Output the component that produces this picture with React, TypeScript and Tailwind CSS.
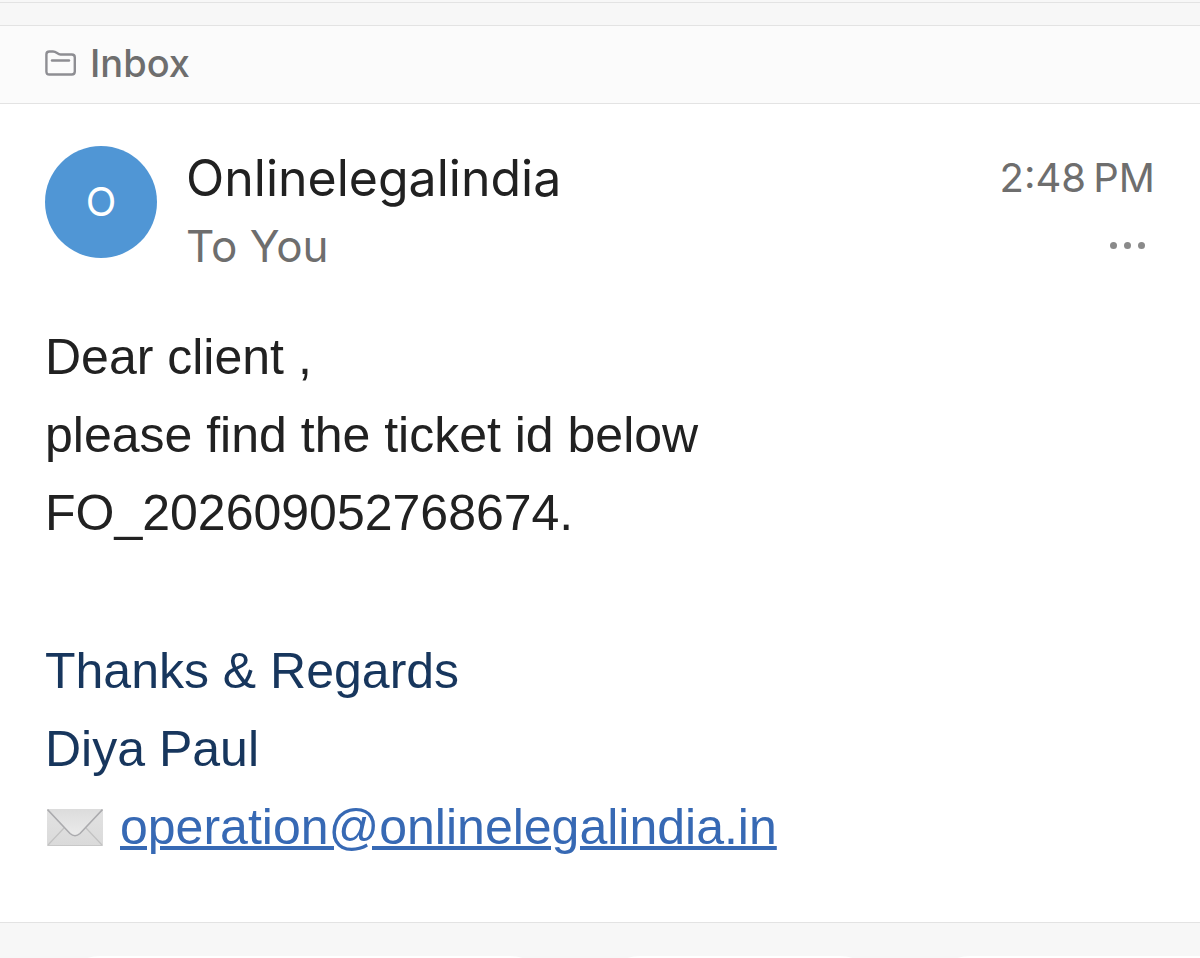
import React from "react";

function FolderIcon() {
  return (
    <svg
      className="w-8 h-8 shrink-0"
      viewBox="0 0 32 32"
      fill="none"
      stroke="#8e8e93"
      strokeWidth="2.4"
      strokeLinecap="round"
      strokeLinejoin="round"
      aria-hidden="true"
    >
      <path d="M1.4 7.5Q1.4 4.5 4.4 4.5H8C11.5 4.5 12.5 7.5 15.5 7.5H26.8Q29.8 7.5 29.8 10.5V24.5Q29.8 27.5 26.8 27.5H4.4Q1.4 27.5 1.4 24.5Z" />
      <path d="M7 13.5H24" />
    </svg>
  );
}

function EnvelopeIcon() {
  return (
    <svg
      className="w-14 h-10 shrink-0"
      viewBox="0 0 56 40"
      fill="none"
      role="img"
      aria-label="Email"
    >
      <defs>
        <linearGradient id="paper" x1="0" y1="0" x2="0" y2="1">
          <stop offset="0" stopColor="#e2e2e2" />
          <stop offset="1" stopColor="#dadada" />
        </linearGradient>
        <linearGradient id="flap" x1="0" y1="0" x2="0" y2="1">
          <stop offset="0" stopColor="#dcdcdc" />
          <stop offset="1" stopColor="#ebebeb" />
        </linearGradient>
      </defs>
      <rect y="2" width="56" height="37" rx="1" fill="url(#paper)" />
      <path d="M1 38L17 21M55 38L39 21" stroke="#c2c2c2" strokeWidth="1.2" />
      <path d="M0.5 38.5H55.5" stroke="#c8c8c8" strokeWidth="1" />
      <path d="M0 2H56L33 26.5Q28 31 23 26.5Z" fill="url(#flap)" />
      <path
        d="M0.5 2.5L23 26.5Q28 31 33 26.5L55.5 2.5"
        stroke="#ababae"
        strokeWidth="1.6"
      />
    </svg>
  );
}

function App() {
  return (
    <div className="h-screen flex flex-col overflow-hidden bg-[#f7f7f7] pt-0.5 font-['Inter',sans-serif]">
      <div className="h-6 border-y border-[#e3e3e3] shrink-0" />

      <main className="bg-white border-b border-[#e3e3e3] shrink-0">
        <header className="flex items-center gap-[13px] h-[78px] px-[45px] pb-1 bg-[#fbfbfb] border-b border-[#e3e3e3]">
          <FolderIcon />
          <h1 className="text-[38px] leading-[48px] font-medium text-[#6e6e6e]">
            Inbox
          </h1>
        </header>

        <section className="flex items-start px-[45px] pt-[42px]">
          <div className="flex items-center justify-center w-28 h-28 shrink-0 rounded-full bg-[#5096d5] text-white text-[40px] leading-[48px]">
            O
          </div>
          <div className="ml-[29px] flex-1">
            <h2 className="text-[50px] leading-[64px] text-[#212121]">
              Onlinelegalindia
            </h2>
            <p className="text-[44px] leading-[72px] text-[#6e6e6e]">To You</p>
          </div>
          <div className="flex flex-col items-end">
            <time className="text-[40px] leading-[64px] text-[#6e6e6e]">
              2:48{"\u2009"}PM
            </time>
            <button
              type="button"
              aria-label="More actions"
              className="flex items-center gap-[7px] h-[70px] pr-2.5"
            >
              <span className="size-[7px] rounded-full bg-[#8a8a8a]" />
              <span className="size-[7px] rounded-full bg-[#8a8a8a]" />
              <span className="size-[7px] rounded-full bg-[#8a8a8a]" />
            </button>
          </div>
        </section>

        <article className="px-[45px] pt-9 pb-14 font-['Liberation_Sans',Arial,sans-serif] text-[50px] leading-[78px] text-[#212121]">
          <p>Dear client ,</p>
          <p>please find the ticket id below</p>
          <p>FO_202609052768674.</p>
          <div className="mt-20 text-[#17365d]">
            <p>Thanks &amp; Regards</p>
            <p>Diya Paul</p>
            <p className="flex items-center gap-[17px] pl-0.5">
              <EnvelopeIcon />
              <a
                href="mailto:operation@onlinelegalindia.in"
                className="underline decoration-4 text-[#3769b4]"
              >
                operation@onlinelegalindia.in
              </a>
            </p>
          </div>
        </article>
      </main>

      {/* tops of the reply buttons */}
      <footer className="mt-[33px] h-20 shrink-0 flex pl-[60px] gap-[50px]">
        <div className="w-[490px] shrink-0 rounded-full bg-white" />
        <div className="w-[280px] shrink-0 rounded-full bg-white" />
        <div className="w-[400px] shrink-0 rounded-full bg-white" />
      </footer>
    </div>
  );
}

export default App;
